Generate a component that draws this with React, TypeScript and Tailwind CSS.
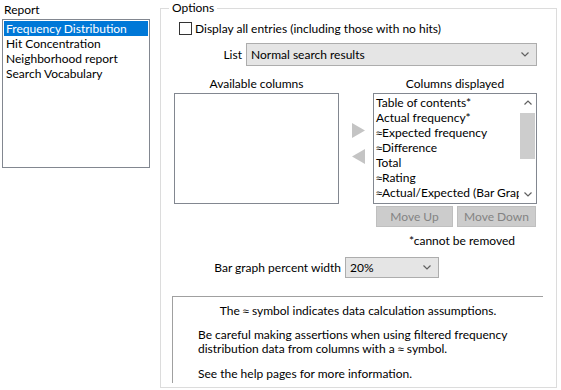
import React from 'react';

const reports = ['Frequency Distribution', 'Hit Concentration', 'Neighborhood report', 'Search Vocabulary'];
const displayed = [
  { approx: false, label: 'Table of contents*' },
  { approx: false, label: 'Actual frequency*' },
  { approx: true, label: 'Expected frequency' },
  { approx: true, label: 'Difference' },
  { approx: false, label: 'Total' },
  { approx: true, label: 'Rating' },
  { approx: true, label: 'Actual/Expected (Bar Graph)' },
];

// Lato draws ≈ oddly, so take it from Noto Sans
const Approx: React.FC = () => <span className="font-['Noto_Sans',sans-serif] text-[11px]">≈</span>;

const Chevron: React.FC<{ dir?: 'down' | 'up' }> = ({ dir = 'down' }) => (
  <svg width="8" height="5" viewBox="0 0 8 5" className="shrink-0">
    <path d={dir === 'down' ? 'M0.5 0.5 L4 4 L7.5 0.5' : 'M0.5 4.5 L4 1 L7.5 4.5'} fill="none" stroke="#606060" strokeWidth="1.2" />
  </svg>
);

const Combo: React.FC<{ value: string; className: string }> = ({ value, className }) => (
  <div className={`flex items-center justify-between bg-[#e5e5e5] border border-[#adadad] pl-[4px] pr-[7px] ${className}`}>
    <span>{value}</span>
    <Chevron />
  </div>
);

const App: React.FC = () => {
  return (
    <div className="w-[561px] h-[390px] bg-white flex text-[12px] text-black font-['Lato',sans-serif] leading-[15px] overflow-hidden">
      {/* report picker */}
      <div className="w-[160px] pl-[2px] shrink-0">
        <div className="pl-[2px] h-[19px] leading-[20px]">Report</div>
        <div className="w-[148px] h-[149px] border border-[#828790] p-[1px]">
          {reports.map((r, i) => (
            <div
              key={r}
              className={`h-[15px] pl-[2px] whitespace-nowrap ${i === 0 ? 'bg-[#0078d7] text-white' : ''}`}
            >
              {r}
            </div>
          ))}
        </div>
      </div>

      {/* options group */}
      <fieldset className="w-[397px] h-[388px] border border-[#dcdcdc] shrink-0">
        <legend className="ml-[8px] px-[3px] leading-[16px]">Options</legend>

        <div className="flex items-center gap-[3px] pl-[18px] mt-[6px] h-[13px]">
          <div className="w-[13px] h-[13px] border border-[#333333] bg-white" />
          <span>Display all entries (including those with no hits)</span>
        </div>

        <div className="flex items-center mt-[8px] pl-[62px] gap-[4px]">
          <span className="w-[19px] text-right">List</span>
          <Combo value="Normal search results" className="w-[291px] h-[23px]" />
        </div>

        <div className="flex mt-[10px] pl-[13px]">
          <div className="w-[165px] flex flex-col">
            <div className="text-center h-[15px]">Available columns</div>
            <div className="h-[111px] border border-[#828790] mt-[2px]" />
          </div>

          <div className="w-[34px] flex flex-col items-center justify-start pt-[47px] pl-[5px] gap-[11px]">
            <svg width="13" height="15" viewBox="0 0 13 15">
              <path d="M0 0 L13 7.5 L0 15 Z" fill="#c4c4c4" />
            </svg>
            <svg width="13" height="15" viewBox="0 0 13 15">
              <path d="M13 0 L0 7.5 L13 15 Z" fill="#c4c4c4" />
            </svg>
          </div>

          <div className="w-[164px] flex flex-col">
            <div className="text-center h-[15px]">Columns displayed</div>
            <div className="h-[111px] border border-[#828790] mt-[2px] flex">
              <div className="flex-1 min-w-0 overflow-hidden pl-[2px] pt-[1px]">
                {displayed.map((c) => (
                  <div key={c.label} className="h-[15px] whitespace-nowrap">
                    {c.approx && <Approx />}
                    {c.label}
                  </div>
                ))}
              </div>
              <div className="w-[17px] flex flex-col items-center">
                <div className="h-[17px] flex items-center justify-center">
                  <Chevron dir="up" />
                </div>
                <div className="w-[15px] h-[46px] bg-[#cdcdcd] mt-[2px]" />
                <div className="flex-1" />
                <div className="h-[17px] flex items-center justify-center">
                  <Chevron />
                </div>
              </div>
            </div>
            <div className="flex gap-[4px] mt-[2px] pl-[3px]">
              <div className="w-[77px] h-[21px] bg-[#cccccc] border border-[#bfbfbf] text-[#838383] flex items-center justify-center">
                Move Up
              </div>
              <div className="w-[79px] h-[21px] bg-[#cccccc] border border-[#bfbfbf] text-[#838383] flex items-center justify-center">
                Move Down
              </div>
            </div>
            <div className="text-center mt-[6px] pl-[14px]">*cannot be removed</div>
          </div>
        </div>

        <div className="flex items-center mt-[9px] gap-[4px]">
          <span className="w-[180px] text-right whitespace-nowrap">Bar graph percent width</span>
          <Combo value="20%" className="w-[94px] h-[21px]" />
        </div>

        <div className="ml-[11px] mt-[18px] w-[371px] h-[87px] border-t border-l border-[#a0a0a0] pl-[25px] pt-[6px]">
          <div className="text-center pr-[25px]">
            The <Approx /> symbol indicates data calculation assumptions.
          </div>
          <div className="mt-[10px] leading-[14px]">
            Be careful making assertions when using filtered frequency
            <br />
            distribution data from columns with a <Approx /> symbol.
          </div>
          <div className="mt-[10px]">See the help pages for more information.</div>
        </div>
      </fieldset>
    </div>
  );
};

export default App;
